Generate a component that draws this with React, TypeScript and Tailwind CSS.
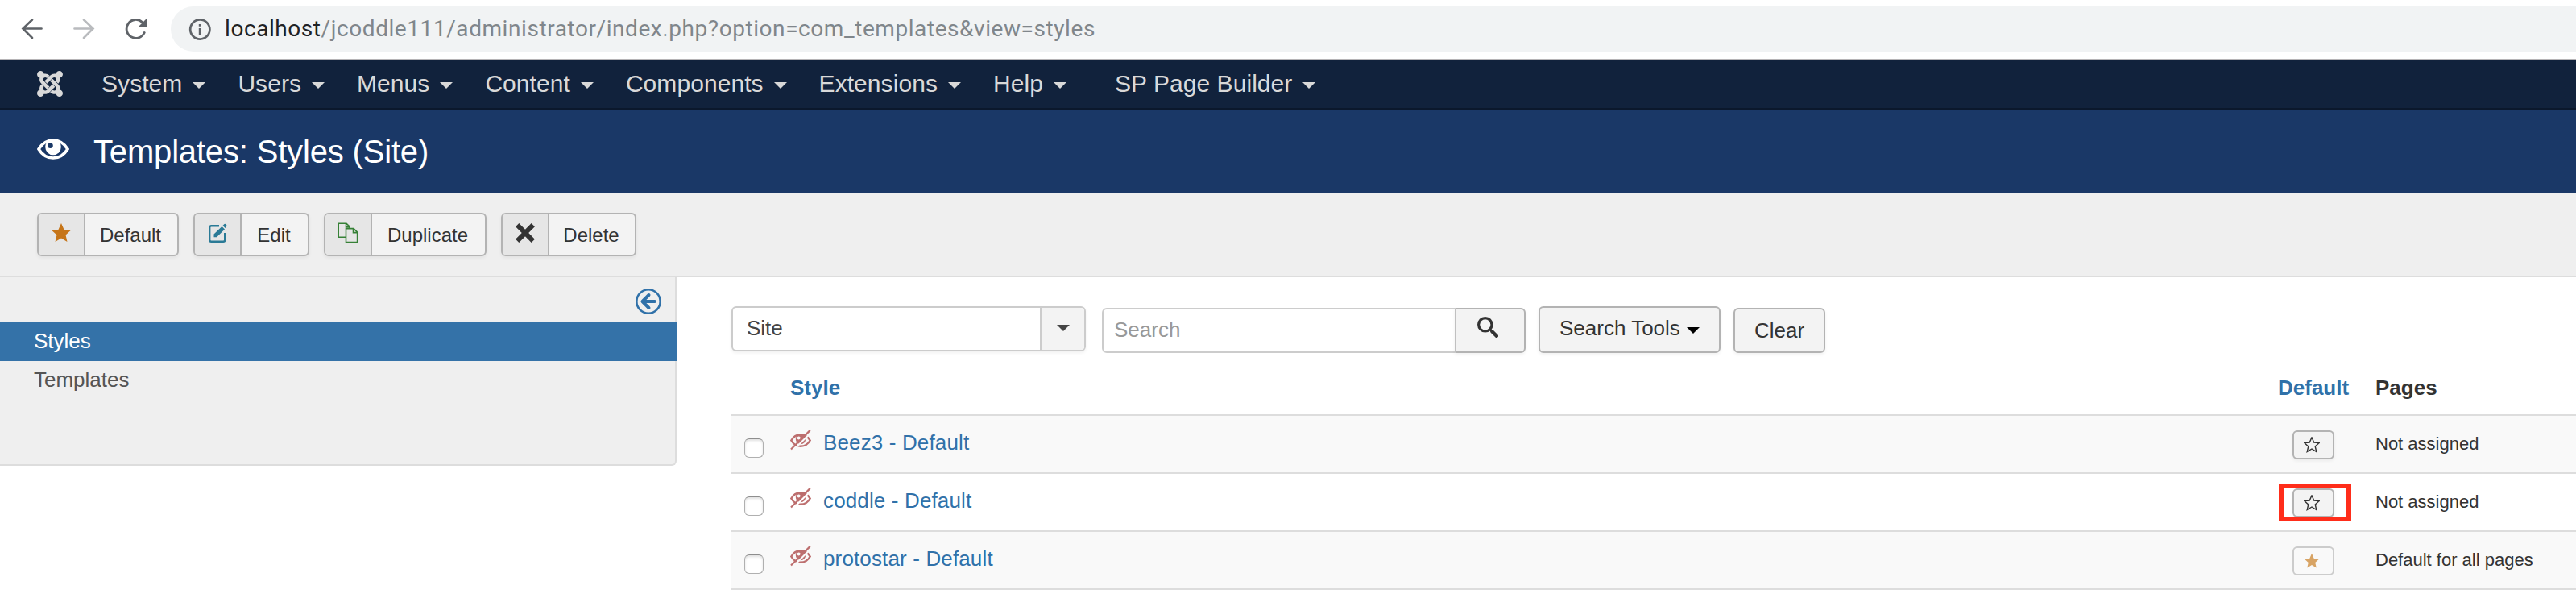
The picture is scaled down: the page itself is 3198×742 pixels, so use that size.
import React from "react";
import { SiJoomla } from "react-icons/si";

function Caret({ className = "" }: { className?: string }) {
  return (
    <svg viewBox="0 0 16 8" className={`h-2 w-4 shrink-0 ${className}`} fill="currentColor">
      <path d="M0 0h16L8 8z" />
    </svg>
  );
}

const STAR = "M12 1l3.3 7.4 7.7.7-5.9 5.2 1.8 7.9L12 18l-6.9 4.2 1.8-7.9L1 9.1l7.7-.7z";

function BrowserBar() {
  return (
    <div className="flex h-[74px] items-start border-b border-[#b6b4b6] bg-white">
      <div className="flex h-[72px] w-[212px] shrink-0 items-center text-[#5f6368]">
        <svg viewBox="0 0 28 28" className="ml-[26px] size-7" fill="none" stroke="currentColor" strokeWidth="2.7" strokeLinecap="round">
          <path d="M25.5 13.5H3M14 2.5l-11.5 11L14 25" strokeLinejoin="miter" />
        </svg>
        <svg viewBox="0 0 28 28" className="ml-[36px] size-7 text-[#b9bbbe]" fill="none" stroke="currentColor" strokeWidth="2.7" strokeLinecap="round">
          <path d="M2.5 13.5H25M14 2.5l11.5 11L14 25" strokeLinejoin="miter" />
        </svg>
        <svg viewBox="0 0 28 28" className="ml-[36px] size-7" fill="none" stroke="currentColor" strokeWidth="2.9" strokeLinecap="round">
          <path d="M25.2 18.500A11.5 11.5 0 1 1 22.5 5.500" />
          <path d="M28 1v11H17z" fill="currentColor" stroke="none" />
        </svg>
      </div>
      <div className="mt-2 flex h-14 flex-1 items-center rounded-l-[28px] bg-[#f1f3f4] pl-[22px]">
        <svg viewBox="0 0 28 28" className="size-7 shrink-0" fill="none" stroke="#5f6368" strokeWidth="2.7">
          <circle cx="14.3" cy="14.5" r="12.1" />
          <path d="M14.3 13v8M14.3 8v2.8" strokeWidth="3" />
        </svg>
        <span className="ml-[17px] whitespace-pre font-['Roboto',sans-serif] text-[28px] leading-[56px] tracking-[0.57px] text-[#80868b]">
          <span className="text-[#202124]">localhost</span>/jcoddle111/administrator/index.php?option=com_templates&amp;view=styles
        </span>
      </div>
    </div>
  );
}

const MENU = ["System", "Users", "Menus", "Content", "Components", "Extensions", "Help"];

function MenuItem({ label }: { label: string }) {
  return (
    <a className="flex items-center gap-[13px] whitespace-nowrap">
      {label}
      <Caret className="mt-1" />
    </a>
  );
}

function NavBar() {
  return (
    <nav className="flex h-[62px] items-center border-b-2 border-[#0b182c] bg-[#11223c] text-[30px] leading-[60px] tracking-[0.06px] text-[#d9d9d9]">
      <SiJoomla className="ml-[46px] size-8 shrink-0" />
      <div className="ml-[48px] flex items-center gap-10">
        {MENU.map((m) => (
          <MenuItem key={m} label={m} />
        ))}
        <div className="ml-5">
          <MenuItem label="SP Page Builder" />
        </div>
      </div>
    </nav>
  );
}

function PageHeader() {
  return (
    <header className="flex h-[104px] items-center bg-[#1a3867] text-white">
      <svg viewBox="0 0 40 26" className="mb-[7px] ml-[46px] h-[26px] w-10" fill="none">
        <path d="M2 13C6.500 5.600 12.500 2 20 2S33.500 5.600 38 13C33.500 20.400 27.500 24 20 24S6.500 20.400 2 13z" stroke="currentColor" strokeWidth="3.600" />
        <circle cx="20" cy="10.500" r="9.800" fill="currentColor" />
        <circle cx="16.500" cy="8.700" r="3.300" fill="#1a3867" />
      </svg>
      <h1 className="ml-[30px] text-[40px] leading-[104px] tracking-[-0.17px]">Templates: Styles (Site)</h1>
    </header>
  );
}

function ToolButton({ label, width, children }: { label: string; width: string; children: React.ReactNode }) {
  return (
    <button className={`flex h-[54px] ${width} overflow-hidden rounded-md border-2 border-[#b3b3b3] bg-[#f3f3f3] text-[24px] leading-[52px] text-[#333] shadow-[0_2px_4px_rgba(0,0,0,0.06)]`}>
      <span className="flex h-full w-[58px] shrink-0 items-center justify-center border-r-2 border-[#b3b3b3] bg-[#e6e6e6] pb-1">
        {children}
      </span>
      <span className="flex-1 pr-0.5 text-center">{label}</span>
    </button>
  );
}

function Toolbar() {
  return (
    <div className="flex h-[104px] items-start gap-[18px] border-b-2 border-[#ddd] bg-[#efefef] pl-[46px] pt-6">
      <ToolButton label="Default" width="w-[176px]">
        <svg viewBox="0 0 24 24" className="size-[26px] text-[#c67519]" fill="currentColor">
          <path d={STAR} />
        </svg>
      </ToolButton>
      <ToolButton label="Edit" width="w-[144px]">
        <svg viewBox="0 0 24 24" className="size-6 text-[#2a7a96]" fill="none" stroke="currentColor" strokeWidth="2.4">
          <path d="M14 3.200H4.200a2 2 0 0 0-2 2v15.600a2 2 0 0 0 2 2h15a2 2 0 0 0 2-2V12" />
          <path d="M7.500 13.500L17.500 4l3.500 3.500L11 17.200H7.500zM18.500 2.900L20.500 1q1-.6 2 .4l.6.7q.8 1-.1 1.900L21.700 6z" fill="currentColor" stroke="none" />
        </svg>
      </ToolButton>
      <ToolButton label="Duplicate" width="w-[202px]">
        <svg viewBox="0 0 26 26" className="size-[26px] text-[#378137]" fill="none" stroke="currentColor" strokeWidth="1.6">
          <path d="M10.500 18.300H1.200V1.200H11l4 4v2.500M10.500 1.200v4.500H15M10.500 7.600h9.500l4.600 4.600v12.400H10.500zM19.500 7.600v5h5" />
        </svg>
      </ToolButton>
      <ToolButton label="Delete" width="w-[168px]">
        <svg viewBox="0 0 24 24" className="size-6 text-[#333]" fill="none" stroke="currentColor" strokeWidth="6">
          <path d="M2.200 2.200l19.600 19.600M21.800 2.200L2.200 21.800" />
        </svg>
      </ToolButton>
    </div>
  );
}

function Sidebar() {
  return (
    <aside className="h-[234px] w-[840px] shrink-0 rounded-br-md border-b-2 border-r-2 border-[#ddd] bg-[#efefef] text-[26px]">
      <div className="flex h-14 justify-end pr-[17px] pt-[14px]">
        <svg viewBox="0 0 32 32" className="size-8 text-[#3071a9]" fill="none" stroke="currentColor">
          <circle cx="16" cy="16" r="14.700" strokeWidth="2.600" />
          <path d="M24 16H9M16.500 8L8.500 16l8 8" strokeWidth="4" strokeLinecap="round" strokeLinejoin="round" />
        </svg>
      </div>
      <div className="mr-[-2px] h-12 bg-[#3472a8] pl-[42px] leading-[47px] text-white">Styles</div>
      <div className="h-12 pl-[42px] leading-[47px] text-[#555]">Templates</div>
    </aside>
  );
}

function Filters() {
  return (
    <div className="flex h-[58px] items-start text-[26px]">
      <div className="flex h-14 w-[440px] overflow-hidden rounded-md border-2 border-[#ccc] shadow-[0_2px_4px_rgba(0,0,0,0.06)]">
        <span className="w-[381px] pl-[17px] leading-[50px] text-[#444]">Site</span>
        <span className="flex flex-1 items-center justify-center border-l-2 border-[#ccc] bg-[#f3f3f3] pb-0.5 text-[#444]">
          <Caret />
        </span>
      </div>
      <div className="ml-5 mt-0.5 flex h-14 w-[526px]">
        <span className="w-[438px] rounded-l-md border-2 border-r-0 border-[#ccc] pl-[13px] leading-[50px] text-[#999]">Search</span>
        <span className="flex flex-1 items-start justify-center rounded-r-md border-2 border-[#b3b3b3] border-l-[#c0c0c0] bg-[#f3f3f3] pr-1.5 pt-[9px] shadow-[0_2px_4px_rgba(0,0,0,0.06)]">
          <svg viewBox="0 0 26 26" className="size-[26px] text-[#333]" fill="none" stroke="currentColor">
            <circle cx="9.800" cy="9.800" r="8.200" strokeWidth="3.200" />
            <path d="M16 16l2 2" strokeWidth="3" />
            <path d="M18.500 18.500l5.300 5.300" strokeWidth="4.400" strokeLinecap="round" />
          </svg>
        </span>
      </div>
      <button className="ml-4 flex h-[58px] w-[226px] items-start rounded-md border-2 border-[#b3b3b3] bg-[#f3f3f3] pl-6 leading-[50px] text-[#333] shadow-[0_2px_4px_rgba(0,0,0,0.06)]">
        Search Tools
        <Caret className="ml-[8px] mt-6 text-black" />
      </button>
      <button className="ml-4 mt-0.5 h-14 w-[114px] rounded-md border-2 border-[#b3b3b3] bg-[#f3f3f3] text-center leading-[50px] text-[#333] shadow-[0_2px_4px_rgba(0,0,0,0.06)]">
        Clear
      </button>
    </div>
  );
}

const GRID = "grid grid-cols-[73px_1847px_121px_1fr]";

const ROWS = [
  { name: "Beez3 - Default", pages: "Not assigned", isDefault: false, marked: false },
  { name: "coddle - Default", pages: "Not assigned", isDefault: false, marked: true },
  { name: "protostar - Default", pages: "Default for all pages", isDefault: true, marked: false },
];

function StylesTable() {
  return (
    <div className="text-[26px]">
      <div className={`${GRID} h-[76px] font-bold leading-[86px]`}>
        <span />
        <span className="text-[#3071a9]">Style</span>
        <span className="text-[#3071a9]">Default</span>
        <span className="text-[#333]">Pages</span>
      </div>
      {ROWS.map((r, i) => (
        <div key={r.name} className={`${GRID} h-[72px] border-t-2 border-[#ddd] ${i % 2 ? "bg-white" : "bg-[#f9f9f9]"}`}>
          <div className="pl-4 pt-7">
            <div className="size-6 rounded-md border border-[#b0b0b0] border-t-[#8e8e8e] bg-white shadow-[inset_0_2px_3px_rgba(0,0,0,0.12)]" />
          </div>
          <div className="flex items-start">
            <svg viewBox="0 0 26 26" className="mt-[17px] size-[26px] text-[#bd6f6f]" fill="none" stroke="currentColor">
              <path d="M1.300 13.500C4 8.600 8 6.300 13 6.300S22 8.600 24.700 13.500C22 18.400 18 20.700 13 20.700S4 18.400 1.300 13.500z" strokeWidth="2.400" />
              <circle cx="13" cy="12" r="6.200" fill="currentColor" stroke="none" />
              <circle cx="10.700" cy="10.500" r="2" fill="#f9f9f9" stroke="none" />
              <path d="M3 26.500L27 2.500" stroke={i % 2 ? "#fff" : "#f9f9f9"} strokeWidth="2" />
              <path d="M1 24.500L24.800.9" strokeWidth="2.200" />
            </svg>
            <a className="ml-[15px] leading-[66px] tracking-[0.14px] text-[#3071a9]">{r.name}</a>
          </div>
          <div className="relative pl-[18px] pt-[18px]">
            <div className={`flex h-9 w-[52px] items-center rounded-md border-2 pl-[12px] ${r.isDefault ? "border-[#ccc]" : "border-[#b3b3b3] bg-[#f3f3f3] shadow-[0_2px_4px_rgba(0,0,0,0.06)]"}`}>
              <svg viewBox="0 0 24 24" className={`size-5 ${r.isDefault ? "text-[#d8a465]" : "text-[#333]"}`} fill={r.isDefault ? "currentColor" : "none"} stroke="currentColor" strokeWidth={r.isDefault ? "0" : "1.7"}>
                <path d={STAR} />
              </svg>
            </div>
            {r.marked && <div className="absolute left-px top-[12px] h-[47px] w-[90px] border-6 border-[#ff2d1a]" />}
          </div>
          <span className="text-[22px] leading-[69px] text-[#333]">{r.pages}</span>
        </div>
      ))}
      <div className="border-t-2 border-[#ddd]" />
    </div>
  );
}

export default function App() {
  return (
    <div className="h-[742px] w-[3198px] overflow-hidden bg-white font-['Liberation_Sans',Arial,sans-serif]">
      <BrowserBar />
      <NavBar />
      <PageHeader />
      <Toolbar />
      <div className="flex">
        <Sidebar />
        <main className="flex-1 pl-[68px] pt-9">
          <Filters />
          <StylesTable />
        </main>
      </div>
    </div>
  );
}
